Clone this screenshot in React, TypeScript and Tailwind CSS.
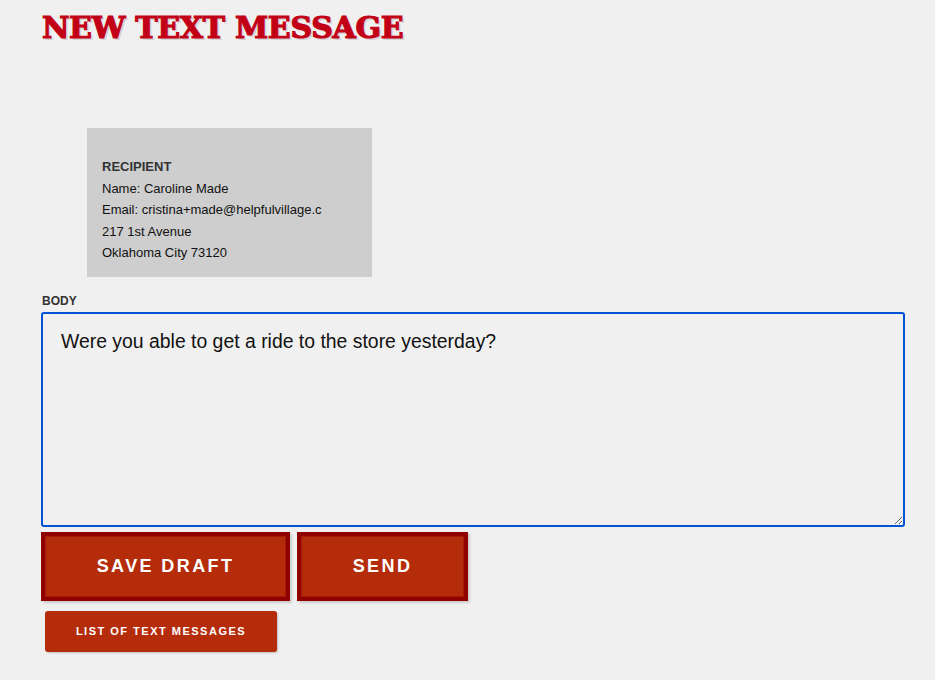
export default function App() {
  return (
    <div className="min-h-[680px] bg-[#f0f0f0] pl-[41px] pr-[30px] pt-[8px] font-['Liberation_Sans',Arial,sans-serif]">
      <h1 className="font-['DejaVu_Serif',serif] text-[30px] leading-[40px] font-bold tracking-[-0.3px] text-[#c20016] [-webkit-text-stroke:1.2px_#c20016] [text-shadow:2px_2px_0_#d4d4d4] pl-px">
        NEW TEXT MESSAGE
      </h1>

      <div className="ml-[46px] mt-[80px] w-[285px] h-[149px] overflow-hidden bg-[#cecece] pl-[15px] pt-[28px] text-[13px] leading-[21.5px] text-[#111]">
        <div className="font-bold text-[#333]">RECIPIENT</div>
        <div>Name: Caroline Made</div>
        <div>Email: cristina+made@helpfulvillage.c</div>
        <div>217 1st Avenue</div>
        <div>Oklahoma City 73120</div>
      </div>

      <label className="block mt-[17px] pl-px text-[12px] leading-[14px] font-bold text-[#333]">BODY</label>
      <textarea
        defaultValue="Were you able to get a ride to the store yesterday?"
        className="block mt-[4px] w-[864px] h-[215px] rounded-[3px] border-2 border-[#0052d6] bg-[#f0f0f0] px-[18px] py-[14px] text-[19.4px] leading-[26px] text-[#111] outline-none font-['Liberation_Sans',Arial,sans-serif]"
      />

      <div className="flex gap-[7px] mt-[5px]">
        <button className="w-[249px] h-[69px] border-[4px] border-[#900000] bg-[#b52c0a] shadow-[inset_0_0_0_1px_#a01c06,2px_2px_2px_rgba(0,0,0,0.15)] text-white text-[18px] font-bold tracking-[2.4px]">
          SAVE DRAFT
        </button>
        <button className="w-[171px] h-[69px] border-[4px] border-[#900000] bg-[#b52c0a] shadow-[inset_0_0_0_1px_#a01c06,2px_2px_2px_rgba(0,0,0,0.15)] text-white text-[18px] font-bold tracking-[2.4px]">
          SEND
        </button>
      </div>

      <button className="block ml-[4px] mt-[10px] w-[232px] h-[41px] rounded-[3px] bg-[#b52c0a] shadow-[1px_1px_2px_rgba(0,0,0,0.2)] text-white text-[11px] font-bold tracking-[1.5px]">
        LIST OF TEXT MESSAGES
      </button>
    </div>
  )
}
